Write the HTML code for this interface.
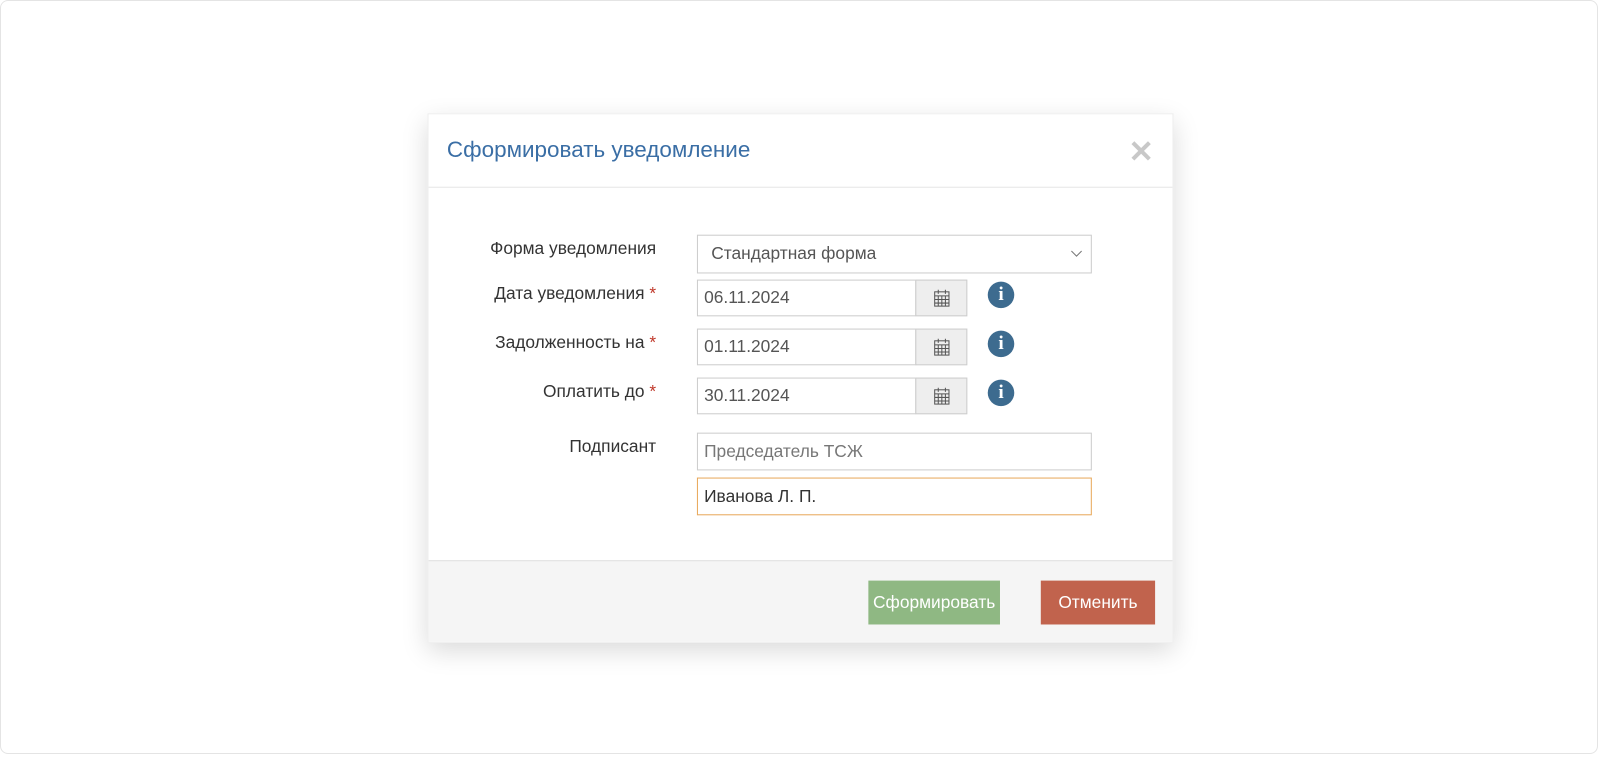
<!DOCTYPE html>
<html><head><meta charset="utf-8"><style>
body{margin:0;width:1600px;height:756px;background:#fff;font-family:"Liberation Sans",sans-serif;position:relative;overflow:hidden}
.frame{position:absolute;left:0;top:0;width:1598px;height:754px;border:1px solid #e4e4e4;border-radius:8px;box-sizing:border-box}
.wrap{position:absolute;left:0;top:0;width:1600px;height:756px;transform:scale(1.0204);transform-origin:0 0}
.modal{position:absolute;left:419px;top:111px;width:731px;height:519px;background:#fff;border:1px solid #eee;box-shadow:0 8px 24px rgba(0,0,0,.15);box-sizing:border-box}
.hd{position:absolute;left:0;top:0;right:0;height:71px;border-bottom:1px solid #e5e5e5}
.title{position:absolute;left:18px;top:22px;font-size:22px;color:#3a6ea5}
.x{position:absolute;right:18px;top:20px;font-size:30px;font-weight:bold;color:#c8c8c8}
.ft{position:absolute;left:0;right:0;top:437px;bottom:0;background:#f5f5f5;border-top:1px solid #e0e0e0}
.btn{position:absolute;top:19px;height:43px;color:#fff;font-size:17px;line-height:43px;text-align:center}
.lbl{position:absolute;right:calc(1600px - 643px);font-size:17px;color:#333;text-align:right;white-space:nowrap}
.lbl b{color:#c0392b;font-weight:normal}
.inp{position:absolute;left:683px;box-sizing:border-box;border:1px solid #ccc;font-size:17px;color:#555;padding-left:6px;display:flex;align-items:center}
.cal{position:absolute;left:897px;width:51px;box-sizing:border-box;border:1px solid #ccc;background:#eee;display:flex;align-items:center;justify-content:center}
.info{position:absolute;left:968px;width:26px;height:26px;border-radius:50%;background:#3d6b8f;color:#fff;font-weight:bold;font-family:"Liberation Serif",serif;font-size:19px;text-align:center;line-height:26px}
</style></head><body>
<div class="frame"></div>
<div class="wrap">
<div class="modal">
<div class="hd"><div class="title">Сформировать уведомление</div><div class="x">✕</div></div>
<div class="ft">
<div class="btn" style="left:431px;width:129px;background:#8fb883">Сформировать</div>
<div class="btn" style="left:600px;width:112px;background:#c1634d">Отменить</div>
</div>
</div>
<div class="lbl" style="top:234px">Форма уведомления</div>
<div class="inp" style="top:230px;width:387px;height:38px;padding-left:13px">Стандартная форма<svg style="position:absolute;right:8px;top:14px" width="12" height="8"><path d="M1 1l5 5 5-5" stroke="#777" fill="none"/></svg></div>
<div class="lbl" style="top:278px">Дата уведомления <b>*</b></div>
<div class="inp" style="top:274px;width:215px;height:36px">06.11.2024</div>
<div class="cal" style="top:274px;height:36px"><svg width="16" height="18"><g fill="none" stroke="#555"><rect x="1" y="3" width="14" height="14"/><path d="M1 7h14M1 10.5h14M1 14h14M4.5 7v10M8 7v10M11.5 7v10M4.5 1v4M11.5 1v4" /></g></svg></div>
<div class="info" style="top:276px">i</div>
<div class="lbl" style="top:326px">Задолженность на <b>*</b></div>
<div class="inp" style="top:322px;width:215px;height:36px">01.11.2024</div>
<div class="cal" style="top:322px;height:36px"><svg width="16" height="18"><g fill="none" stroke="#555"><rect x="1" y="3" width="14" height="14"/><path d="M1 7h14M1 10.5h14M1 14h14M4.5 7v10M8 7v10M11.5 7v10M4.5 1v4M11.5 1v4" /></g></svg></div>
<div class="info" style="top:324px">i</div>
<div class="lbl" style="top:374px">Оплатить до <b>*</b></div>
<div class="inp" style="top:370px;width:215px;height:36px">30.11.2024</div>
<div class="cal" style="top:370px;height:36px"><svg width="16" height="18"><g fill="none" stroke="#555"><rect x="1" y="3" width="14" height="14"/><path d="M1 7h14M1 10.5h14M1 14h14M4.5 7v10M8 7v10M11.5 7v10M4.5 1v4M11.5 1v4" /></g></svg></div>
<div class="info" style="top:372px">i</div>
<div class="lbl" style="top:428px">Подписант</div>
<div class="inp" style="top:424px;width:387px;height:37px;color:#777">Председатель ТСЖ</div>
<div class="inp" style="top:468px;width:387px;height:37px;border-color:#e8a85a;color:#333">Иванова Л. П.</div>
</div>
</body></html>
